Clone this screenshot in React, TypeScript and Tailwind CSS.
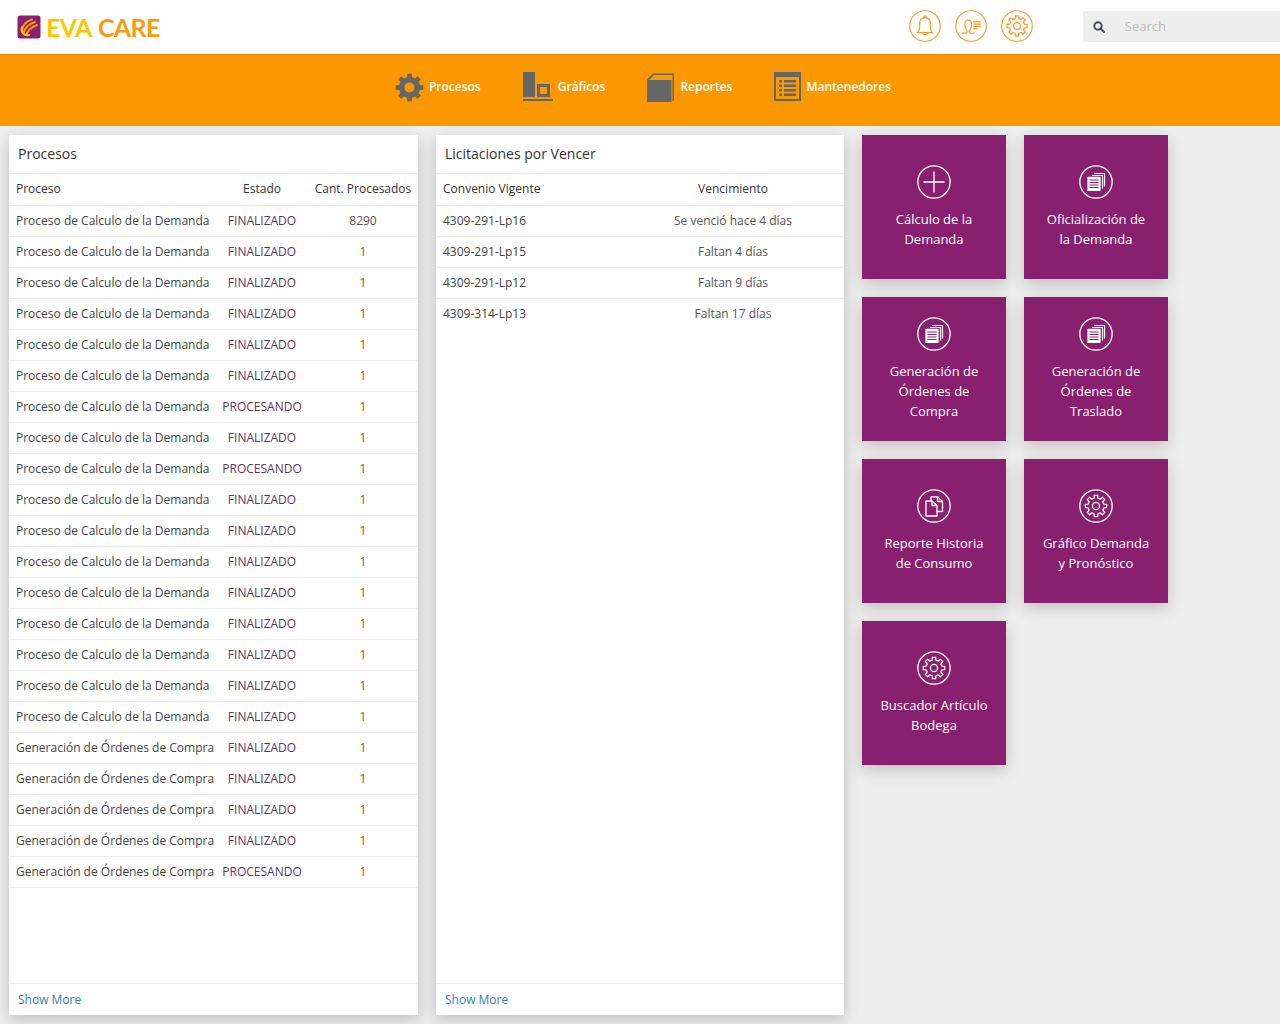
import React from "react";

const gearPath = (cx: number, cy: number, R: number, r: number, teeth = 8) => {
  const pts: string[] = [];
  const step = (Math.PI * 2) / teeth;
  for (let i = 0; i < teeth; i++) {
    const a = i * step - Math.PI / 2;
    const w = step * 0.2;
    const w2 = step * 0.3;
    const p = (rad: number, an: number) => `${(cx + rad * Math.cos(an)).toFixed(2)} ${(cy + rad * Math.sin(an)).toFixed(2)}`;
    pts.push(`${i === 0 ? "M" : "L"}${p(r, a - w2)}`, `L${p(R, a - w)}`, `L${p(R, a + w)}`, `L${p(r, a + w2)}`);
    pts.push(`A${r} ${r} 0 0 1 ${p(r, a + step - w2)}`);
  }
  return pts.join(" ") + "Z";
};

const Ring = ({ size, color, sw, children }: { size: number; color: string; sw: number; children: React.ReactNode }) => (
  <svg width={size} height={size} viewBox="0 0 34 34" fill="none" stroke={color} strokeWidth={sw} strokeLinejoin="round" strokeLinecap="round">
    <circle cx="17" cy="17" r={17 - sw / 2 - 0.2} />
    {children}
  </svg>
);

const PlusGlyph = () => <path d="M17 6.5V27.5M6.5 17H27.5" strokeLinecap="butt" />;
const PagesGlyph = () => (
  <g strokeWidth="1.2" strokeLinecap="butt">
    <path d="M15 8.5H25.5V21.5" />
    <path d="M13 10.5H23.5V23.5" />
    <rect x="9" y="12.3" width="12" height="13.2" fill="#fff" stroke="#fff" />
    <path d="M10.5 15H19.5M10.5 17.5H19.5M10.5 20H19.5M10.5 22.5H19.5" stroke="#88206f" strokeWidth="1" />
  </g>
);
const CopyGlyph = () => (
  <g strokeWidth="1.3" strokeLinecap="butt">
    <path d="M14 12V7.8H20.5L25.5 12.5V22.5H20" />
    <path d="M20.5 7.8V12.5H25.5" />
    <path d="M9 12H15L20 16.5V27H9Z" />
    <path d="M15 12V16.5H20" />
  </g>
);
const GearGlyph = () => (
  <g strokeWidth="1.3">
    <path d={gearPath(17, 17, 10.8, 8)} />
    <circle cx="17" cy="17" r="3.6" />
  </g>
);

const BellGlyph = () => (
  <g strokeWidth="1.3">
    <path d="M17 8.2C13.2 8.2 11.3 11 11.3 14.5V18.5C11.3 21 10 22.6 8.9 24H25.1C24 22.6 22.7 21 22.7 18.5V14.5C22.7 11 20.8 8.2 17 8.2Z" />
    <path d="M15.5 8.4C15.5 5.6 18.5 5.6 18.5 8.4" />
    <path d="M14.8 24.2C15 26.8 19 26.8 19.2 24.2" />
  </g>
);
const PersonGlyph = () => (
  <g strokeWidth="1.3">
    <path d="M7.5 24.5H11.5C13 24.5 13.3 22.5 12.2 21C10.8 19.2 10.3 17.5 10.3 15.5C10.3 12.5 11.7 10.7 14 10.7C16.3 10.7 17.7 12.5 17.7 15.5C17.7 17.5 17.2 19.2 15.8 21C14.7 22.5 15 24.5 16.5 24.5H20.5" />
    <path d="M19 12.5H27.5M19.5 15H27.5M19.5 17.5H27.5M19 20H24" strokeLinecap="butt" />
  </g>
);

const procRow = (p: string, e: string, c: string) => ({ p, e, c });
const D = "Proceso de Calculo de la Demanda";
const G = "Generación de Órdenes de Compra";
const F = "FINALIZADO";
const PR = "PROCESANDO";
const rows = [
  procRow(D, F, "8290"),
  ...[F, F, F, F, F, PR, F, PR, F, F, F, F, F, F, F, F].map((e) => procRow(D, e, "1")),
  ...[F, F, F, F, PR].map((e) => procRow(G, e, "1")),
];
const lic = [
  ["4309-291-Lp16", "Se venció hace 4 días"],
  ["4309-291-Lp15", "Faltan 4 días"],
  ["4309-291-Lp12", "Faltan 9 días"],
  ["4309-314-Lp13", "Faltan 17 días"],
];

const Panel = ({ title, w, children }: { title: string; w: string; children: React.ReactNode }) => (
  <section className={`${w} h-[880px] bg-white flex flex-col shadow-[0_5px_15px_rgba(0,0,0,0.2)]`}>
    <h2 className="h-[39px] shrink-0 border-b border-[#eeeeee] pl-[9px] flex items-center text-[14px] leading-5 font-normal text-[#333333]">{title}</h2>
    <div className="flex-1">{children}</div>
    <div className="h-[32px] shrink-0 border-t border-[#eeeeee] pl-[9px] flex items-center text-[12px] text-[#3583b5]">Show More</div>
  </section>
);

const tiles: { lines: string[]; glyph: React.ReactNode }[][] = [
  [
    { lines: ["Cálculo de la", "Demanda"], glyph: <PlusGlyph /> },
    { lines: ["Oficialización de", "la Demanda"], glyph: <PagesGlyph /> },
  ],
  [
    { lines: ["Generación de", "Órdenes de", "Compra"], glyph: <PagesGlyph /> },
    { lines: ["Generación de", "Órdenes de", "Traslado"], glyph: <PagesGlyph /> },
  ],
  [
    { lines: ["Reporte Historia", "de Consumo"], glyph: <CopyGlyph /> },
    { lines: ["Gráfico Demanda", "y Pronóstico"], glyph: <GearGlyph /> },
  ],
  [{ lines: ["Buscador Artículo", "Bodega"], glyph: <GearGlyph /> }],
];

const NavItem = ({ icon, label }: { icon: React.ReactNode; label: string }) => (
  <a className="flex items-center gap-[5px] text-white text-[12px] font-semibold h-[30px]">
    {icon}
    <span>{label}</span>
  </a>
);

export default function App() {
  return (
    <div className="w-[1280px] h-[1024px] overflow-hidden bg-[#eeeeee] font-['Open_Sans',sans-serif] text-[#333333]">
      <header className="h-[54px] bg-white flex items-center relative">
        <div className="ml-[17px] flex items-center gap-[5px]">
          <svg width="24" height="24" viewBox="0 0 24 24" fill="none">
            <rect x="0.5" y="0.5" width="23" height="23" rx="2.5" fill="#88206f" />
            <path d="M5 15C6 10 10 6 15 4.5M6.5 18C8 13 12 9 18 7M9 20C11 16 14 12 20 10" stroke="#fb9800" strokeWidth="2" strokeLinecap="round" />
            <path d="M5 12C3.5 17 7 21 12 20" stroke="#fbc800" strokeWidth="2" strokeLinecap="round" />
          </svg>
          <div className="font-['Lato',sans-serif] font-bold text-[25px] leading-none tracking-[-0.6px] flex gap-[6px]">
            <span className="text-[#fdc800]">EVA</span>
            <span className="text-[#fb9a0c]">CARE</span>
          </div>
        </div>
        <div className="ml-[749px] flex items-center gap-[14px] mb-[2px]">
          <Ring size={32} color="#fb9a2c" sw={1.2}><BellGlyph /></Ring>
          <Ring size={32} color="#fb9a2c" sw={1.2}><PersonGlyph /></Ring>
          <Ring size={32} color="#fb9a2c" sw={1.2}><GearGlyph /></Ring>
        </div>
        <div className="ml-[50px] w-[200px] h-[31px] bg-[#eeeeee] flex items-center mt-[-1px]">
          <svg className="ml-[10px]" width="12" height="12" viewBox="0 0 12 12" fill="none" stroke="#4a5058" strokeWidth="2">
            <circle cx="5" cy="5" r="3.7" />
            <path d="M7.8 7.8L11 11" strokeLinecap="round" />
          </svg>
          <span className="ml-[20px] text-[13px] text-[#bbbbbb]">Search</span>
        </div>
      </header>

      <nav className="h-[72px] bg-[#fb9800] border-t border-[#e58a00] flex justify-center items-start pt-[17px] pl-[6px] gap-[42px]">
        <NavItem
          label="Procesos"
          icon={
            <svg width="29" height="29" viewBox="0 0 29 29" fill="#666666">
              <path fillRule="evenodd" d={gearPath(14.5, 14.5, 14, 10.5) + " M14.5 9.5a5 5 0 1 0 0 10a5 5 0 1 0 0-10Z"} />
            </svg>
          }
        />
        <NavItem
          label="Gráficos"
          icon={
            <svg width="30" height="30" viewBox="0 0 30 30" fill="#666666">
              <rect x="0" y="0" width="12" height="25" />
              <path fillRule="evenodd" d="M14 12H27V25H14Z M17 15V22H24V15Z" />
              <rect x="0" y="27" width="30" height="2" />
            </svg>
          }
        />
        <NavItem
          label="Reportes"
          icon={
            <svg width="28" height="30" viewBox="0 0 28 30" fill="#666666">
              <path d="M0 6.5L5 1H24V27H0Z" fill="none" />
              <path d="M0 7.5L6 1.5H27V29H25.5V3H7L2 8H24.5V30H0Z" />
            </svg>
          }
        />
        <NavItem
          label="Mantenedores"
          icon={
            <svg width="27" height="30" viewBox="0 0 27 30" fill="#666666">
              <path fillRule="evenodd" d="M0 0H27V29H0Z M2 5V27H25V5Z" />
              <path d="M5 8H8V10.5H5ZM10 8H22V10.5H10ZM5 12.5H8V15H5ZM10 12.5H22V15H10ZM5 17H8V19.5H5ZM10 17H22V19.5H10ZM5 21.5H8V24H5ZM10 21.5H22V24H10Z" />
            </svg>
          }
        />
      </nav>

      <main className="flex items-start pt-[9px] pl-[9px]">
        <Panel title="Procesos" w="w-[409px]">
          <table className="w-full table-fixed text-[12px] border-collapse">
            <colgroup>
              <col className="w-[207px]" />
              <col className="w-[92px]" />
              <col className="w-[110px]" />
            </colgroup>
            <thead>
              <tr className="h-[31px] border-b border-[#eeeeee]">
                <th className="font-normal text-left pl-[7px] text-[#333333]">Proceso</th>
                <th className="font-normal text-center text-[#333333]">Estado</th>
                <th className="font-normal text-center text-[#333333] whitespace-nowrap">Cant. Procesados</th>
              </tr>
            </thead>
            <tbody>
              {rows.map((r, i) => (
                <tr key={i} className="h-[31px] border-b border-[#eeeeee]">
                  <td className="pl-[7px] whitespace-nowrap text-[#444444]">{r.p}</td>
                  <td className="text-center text-[#5a3a5a]">{r.e}</td>
                  <td className={`text-center ${r.c === "1" ? "text-[#8a5a20]" : "text-[#555555]"}`}>{r.c}</td>
                </tr>
              ))}
            </tbody>
          </table>
        </Panel>
        <div className="ml-[18px]">
          <Panel title="Licitaciones por Vencer" w="w-[408px]">
            <table className="w-full table-fixed text-[12px] border-collapse">
              <colgroup>
                <col className="w-[186px]" />
                <col className="w-[222px]" />
              </colgroup>
              <thead>
                <tr className="h-[31px] border-b border-[#eeeeee]">
                  <th className="font-normal text-left pl-[7px] text-[#333333]">Convenio Vigente</th>
                  <th className="font-normal text-center text-[#333333]">Vencimiento</th>
                </tr>
              </thead>
              <tbody>
                {lic.map((r) => (
                  <tr key={r[0]} className="h-[31px] border-b border-[#eeeeee] last:border-b-0">
                    <td className="pl-[7px] text-[#444444]">{r[0]}</td>
                    <td className="text-center text-[#555555]">{r[1]}</td>
                  </tr>
                ))}
              </tbody>
            </table>
          </Panel>
        </div>
        <div className="ml-[18px] flex flex-col gap-[18px]">
          {tiles.map((row, i) => (
            <div key={i} className="flex gap-[18px]">
              {row.map((t) => (
                <a key={t.lines.join()} className="w-[144px] h-[144px] bg-[#88206f] shadow-[0_5px_15px_rgba(0,0,0,0.2)] flex flex-col items-center justify-center text-center text-white text-[13px] leading-5">
                  <Ring size={34} color="#ffffff" sw={1.3}>{t.glyph}</Ring>
                  <div className="mt-[10px]">
                    {t.lines.map((l) => (
                      <div key={l}>{l}</div>
                    ))}
                  </div>
                </a>
              ))}
            </div>
          ))}
        </div>
      </main>
    </div>
  );
}
